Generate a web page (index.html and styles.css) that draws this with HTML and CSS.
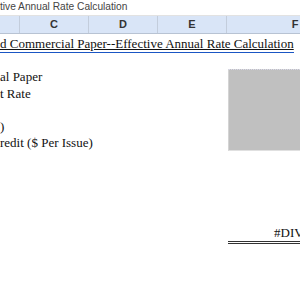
FILE: index.html
```html
<!DOCTYPE html>
<html lang="en">
<head>
    <meta charset="UTF-8">
    <meta name="viewport" content="width=device-width, initial-scale=1.0">
    <title>Effective Annual Rate Calculation</title>
    <link rel="stylesheet" href="styles.css">
</head>
<body>
    <div class="doc-title">tive Annual Rate Calculation</div>

    <div class="col-header">
        <div class="col col-b"></div>
        <div class="col">C</div>
        <div class="col">D</div>
        <div class="col">E</div>
        <div class="col col-f">F</div>
    </div>

    <div class="sheet">
        <div class="row row-title">
            <span class="title-text">d Commercial Paper--Effective Annual Rate Calculation</span>
        </div>
        <div class="row"></div>

        <div class="block">
            <div class="labels">
                <div class="row">al Paper</div>
                <div class="row">t Rate</div>
                <div class="row"></div>
                <div class="row">)</div>
                <div class="row">redit ($ Per Issue)</div>
            </div>
            <div class="input-box"></div>
        </div>

        <div class="result">
            <div class="result-cell">#DIV/0!</div>
        </div>
    </div>
</body>
</html>
```

FILE: styles.css
```css
body {
    margin: 0;
    padding: 0;
    width: 300px;
    height: 300px;
    overflow: hidden;
    background: #fff;
    font-family: "Liberation Serif", "Times New Roman", serif;
    color: #111;
}

.doc-title {
    height: 15px;
    line-height: 14px;
    font-family: "Liberation Sans", Arial, sans-serif;
    font-size: 10.2px;
    color: #444;
    white-space: nowrap;
    border-bottom: 1px solid #e2e2e2;
}

.col-header {
    display: flex;
    height: 17px;
    background: #d9e5f7;
    border-bottom: 1px solid #b8c3d3;
    font-family: "Liberation Sans", Arial, sans-serif;
    font-size: 11px;
    font-weight: bold;
    color: #333;
    white-space: nowrap;
}

.col {
    flex: 0 0 69px;
    border-right: 1px solid #c3cddc;
    text-align: center;
    line-height: 17px;
    box-sizing: border-box;
}

.col-b {
    flex-basis: 20px;
}

.col-f {
    flex-basis: 136px;
    border-right: none;
}

.sheet {
    font-size: 13px;
    white-space: nowrap;
}

.row {
    height: 16.4px;
    line-height: 16.4px;
}

.row-title {
    height: 19px;
    line-height: 19px;
}

.title-text {
    display: inline-block;
    text-decoration: underline;
    border-bottom: 1px solid #1a56c4;
    line-height: 17px;
}

.block {
    display: grid;
    grid-template-columns: 228px 1fr;
}

.input-box {
    background: #c0c0c0;
    border-left: 1px solid #d4d4d4;
    border-top: 1px dotted #d8d8e8;
    border-bottom: 1px solid #e0e0e0;
}

.result {
    display: flex;
    justify-content: flex-end;
    padding-top: 74px;
    margin-left: 228px;
}

.result-cell {
    width: 72px;
    box-sizing: border-box;
    padding-left: 46px;
    line-height: 16px;
    border-bottom: 3px double #333;
    overflow: hidden;
}
```
